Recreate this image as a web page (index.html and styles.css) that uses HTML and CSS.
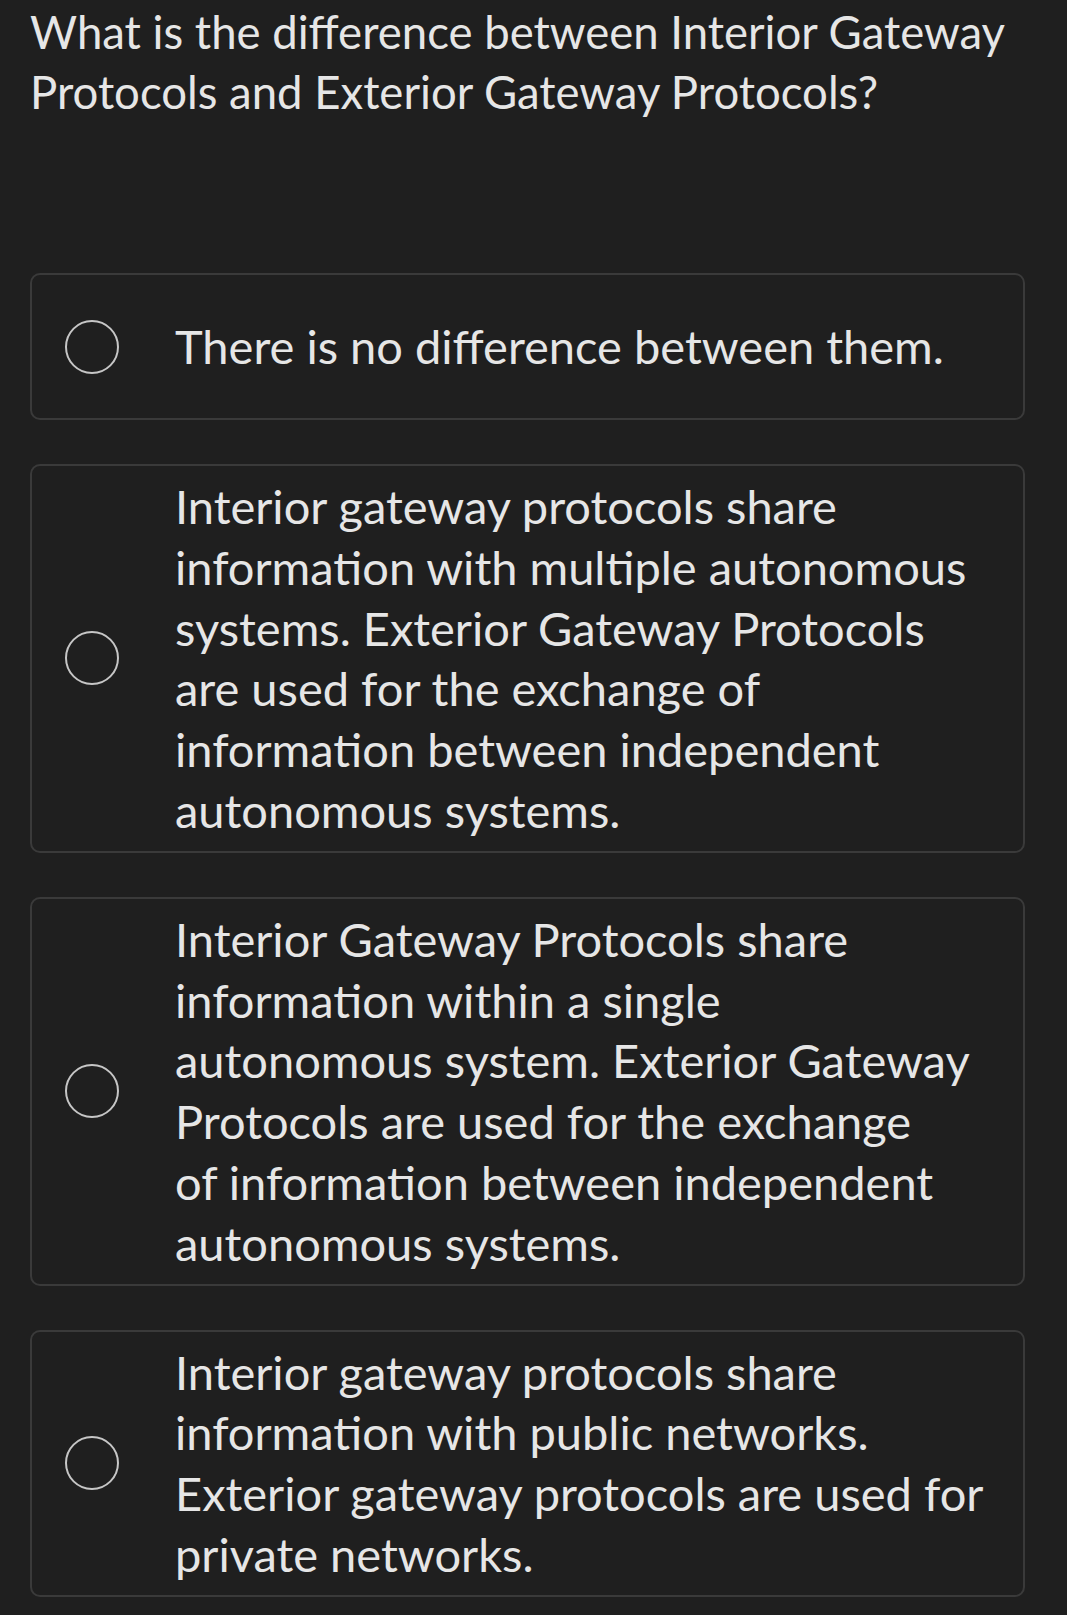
FILE: index.html
```html
<!DOCTYPE html>
<html lang="en">
<head>
    <meta charset="UTF-8">
    <meta name="viewport" content="width=device-width, initial-scale=1.0">
    <title>Quiz</title>
    <link rel="stylesheet" href="styles.css">
</head>
<body>
    <div class="quiz">
        <h2 class="question">What is the difference between Interior Gateway Protocols and Exterior Gateway Protocols?</h2>

        <ul class="options">
            <li class="option">
                <span class="radio"></span>
                <p class="label">There is no difference between them.</p>
            </li>
            <li class="option">
                <span class="radio"></span>
                <p class="label">Interior gateway protocols share<br>information with multiple autonomous<br>systems. Exterior Gateway Protocols<br>are used for the exchange of<br>information between independent<br>autonomous systems.</p>
            </li>
            <li class="option">
                <span class="radio"></span>
                <p class="label">Interior Gateway Protocols share<br>information within a single<br>autonomous system. Exterior Gateway<br>Protocols are used for the exchange<br>of information between independent<br>autonomous systems.</p>
            </li>
            <li class="option">
                <span class="radio"></span>
                <p class="label">Interior gateway protocols share<br>information with public networks.<br>Exterior gateway protocols are used for<br>private networks.</p>
            </li>
        </ul>
    </div>
</body>
</html>
```
FILE: styles.css
```css
* {
    padding: 0;
    margin: 0;
    box-sizing: border-box;
}

body {
    background: #1f1f1f;
    color: #e6e6e6;
    font-family: Lato, "Noto Sans", sans-serif;
}

.quiz {
    width: 995px;
    margin-left: 30px;
    padding-top: 2px;
}

.question {
    font-size: 45.5px;
    font-weight: 400;
    line-height: 60px;
    margin-bottom: 151px;
}

ul {
    list-style: none;
}

.options {
    display: flex;
    flex-direction: column;
    gap: 44px;
}

.option {
    display: flex;
    align-items: center;
    min-height: 147px;
    padding: 10px 20px 10px 33px;
    border: 2px solid #3a3a3a;
    border-radius: 10px;
    cursor: pointer;
}

.option .radio {
    flex: none;
    width: 54px;
    height: 54px;
    border: 2.5px solid #c6c6c6;
    border-radius: 50%;
    margin-right: 56px;
}

.option .label {
    font-size: 47px;
    line-height: 60.8px;
}
```
